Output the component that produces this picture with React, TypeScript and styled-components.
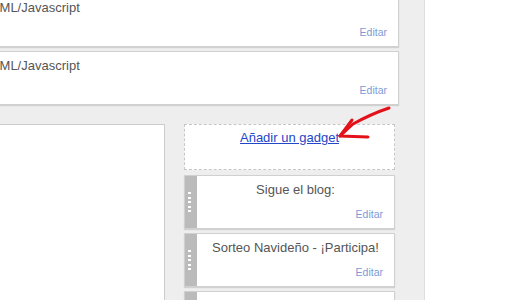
import React from "react";
import styled, { createGlobalStyle } from "styled-components";

const GlobalStyle = createGlobalStyle`
    body {
        margin: 0;
        font-family: Arial, "Liberation Sans", sans-serif;
        background: #ffffff;
    }
`;

type WidgetData = {
    title: string;
};

const topWidgets: WidgetData[] = [
    { title: "HTML/Javascript" },
    { title: "HTML/Javascript" },
];

const sideWidgets: WidgetData[] = [
    { title: "Sigue el blog:" },
    { title: "Sorteo Navideño - ¡Participa!" },
    { title: "Entradas populares" },
];

function Handle() {
    return (
        <Grip>
            {[0, 1, 2, 3, 4].map((i) => <Dot key={i} />)}
        </Grip>
    );
}

function Widget({ title }: WidgetData) {
    return (
        <WidgetBox>
            <Handle />
            <WidgetBody>
                <Title>{title}</Title>
                <Edit href="#">Editar</Edit>
            </WidgetBody>
        </WidgetBox>
    );
}

export default function App() {
    return (
        <>
            <GlobalStyle />
            <Page>
                <Editor>
                    <TopSection>
                        {topWidgets.map((w, i) => <Widget key={i} title={w.title} />)}
                    </TopSection>
                    <Columns>
                        <MainBox />
                        <Sidebar>
                            <AddGadget>
                                <a href="#">Añadir un gadget</a>
                            </AddGadget>
                            {sideWidgets.map((w, i) => <Widget key={i} title={w.title} />)}
                        </Sidebar>
                    </Columns>
                </Editor>
                <RightPane />
                <Arrow width="70" height="45" viewBox="0 0 70 45">
                    <path d="M59 8 Q41 14 23 24 L10 36" />
                    <path d="M22 20 L10 36 L38 37" />
                </Arrow>
            </Page>
        </>
    );
}

const Page = styled.div`
    position: relative;
    display: flex;
    height: 300px;
    overflow: hidden;
`;

const Editor = styled.div`
    flex: none;
    box-sizing: border-box;
    width: 777px;
    margin-left: -352px;
    padding: 0 25px 0 3px;
    background: #eeeeee;
    border-right: 1px solid #dedede;
`;

const RightPane = styled.div`
    flex: 1;
    background: #ffffff;
`;

const TopSection = styled.div`
    margin-top: -7px;
`;

const WidgetBox = styled.div`
    display: flex;
    box-sizing: border-box;
    height: 54px;
    margin-bottom: 4px;
    background: #ffffff;
    border: 1px solid #d0d0d0;
    box-shadow: 0 1px 1px rgba(0, 0, 0, 0.12);
`;

const Grip = styled.div`
    flex: none;
    width: 12px;
    background: #bbbbbb;
    display: flex;
    flex-direction: column;
    justify-content: center;
    align-items: flex-start;
    gap: 2.5px;
    padding-left: 3px;
    box-sizing: border-box;
`;

const Dot = styled.div`
    width: 3px;
    height: 2px;
    background: #ffffff;
`;

const WidgetBody = styled.div`
    flex: 1;
    display: flex;
    flex-direction: column;
    padding: 6px 11px 0;
    text-align: center;
`;

const Title = styled.div`
    font-size: 13px;
    line-height: 16px;
    color: #555555;
`;

const Edit = styled.a`
    align-self: flex-end;
    margin-top: 10px;
    font-size: 10.5px;
    line-height: 13px;
    color: #7e9ad6;
    text-decoration: none;
`;

const Columns = styled.div`
    display: flex;
    gap: 19px;
    margin-top: 19px;
`;

const MainBox = styled.div`
    flex: 1;
    height: 400px;
    background: #ffffff;
    border: 1px solid #cccccc;
`;

const Sidebar = styled.div`
    flex: none;
    width: 211px;
    margin-right: 4px;
`;

const AddGadget = styled.div`
    box-sizing: border-box;
    height: 46px;
    margin-bottom: 5px;
    padding-top: 3px;
    background: #ffffff;
    border: 1px dashed #c6c6c6;
    text-align: center;

    a {
        font-size: 13px;
        line-height: 16px;
        color: #2446c8;
        text-decoration: underline;
    }
`;

const Arrow = styled.svg`
    position: absolute;
    left: 330px;
    top: 100px;
    fill: none;
    stroke: #e3121a;
    stroke-width: 3;
    stroke-linecap: round;
    stroke-linejoin: round;
`;
